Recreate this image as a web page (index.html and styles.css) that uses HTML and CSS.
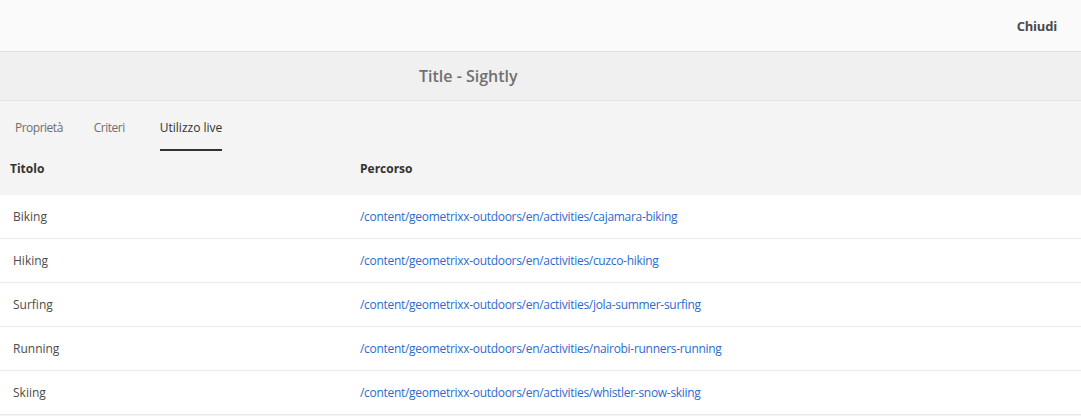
FILE: index.html
```html
<!DOCTYPE html>
<html lang="it">
<head>
<meta charset="utf-8">
<title>Title - Sightly</title>
<link rel="stylesheet" href="styles.css">
</head>
<body>
<header class="topbar">
  <button class="close-btn">Chiudi</button>
</header>
<div class="titlebar">
  <h1 class="title">Title - Sightly</h1>
</div>
<main class="content">
  <nav class="tabs">
    <a class="tab">Proprietà</a>
    <a class="tab">Criteri</a>
    <a class="tab active">Utilizzo live</a>
  </nav>
  <table class="usage">
    <thead>
      <tr><th class="col-title">Titolo</th><th>Percorso</th></tr>
    </thead>
    <tbody>
      <tr><td>Biking</td><td><a class="path">/content/geometrixx-outdoors/en/activities/cajamara-biking</a></td></tr>
      <tr><td>Hiking</td><td><a class="path">/content/geometrixx-outdoors/en/activities/cuzco-hiking</a></td></tr>
      <tr><td>Surfing</td><td><a class="path">/content/geometrixx-outdoors/en/activities/jola-summer-surfing</a></td></tr>
      <tr><td>Running</td><td><a class="path">/content/geometrixx-outdoors/en/activities/nairobi-runners-running</a></td></tr>
      <tr><td>Skiing</td><td><a class="path">/content/geometrixx-outdoors/en/activities/whistler-snow-skiing</a></td></tr>
    </tbody>
  </table>
</main>
</body>
</html>
```
FILE: styles.css
```css
* { box-sizing: border-box; }
html, body { margin: 0; padding: 0; }
body {
  font-family: "Open Sans", "Noto Sans", sans-serif;
  background: #f4f4f4;
  color: #323232;
  width: 1081px;
  height: 416px;
  overflow: hidden;
}
.topbar {
  height: 52px;
  background: #fafafa;
  border-bottom: 1px solid #e1e1e1;
  display: flex;
  justify-content: flex-end;
  align-items: center;
  padding-right: 24px;
}
.close-btn {
  font-family: inherit;
  font-size: 13px;
  font-weight: 700;
  color: #4b4b4b;
  background: none;
  border: 0;
  padding: 0;
  margin-top: 1px;
  letter-spacing: -0.2px;
}
.titlebar {
  height: 49px;
  background: #f0f0f0;
  border-bottom: 1px solid #e1e1e1;
  display: flex;
  align-items: center;
  padding-left: 419px;
}
.title {
  margin: 0;
  font-size: 16px;
  font-weight: 600;
  color: #707070;
  letter-spacing: 0;
}
.content { background: #f4f4f4; }
.tabs {
  display: flex;
  height: 50px;
  padding-left: 15px;
}
.tab {
  font-size: 12px;
  color: #6e6e6e;
  display: flex;
  align-items: center;
  padding-top: 4px;
  border-bottom: 2px solid transparent;
  letter-spacing: -0.5px;
}
.tab + .tab { margin-left: 31px; }
.tab.active {
  margin-left: 35px;
  color: #323232;
  border-bottom-color: #323232;
  letter-spacing: 0;
}
.usage {
  width: 100%;
  border-collapse: separate;
  border-spacing: 0;
}
.usage th {
  text-align: left;
  font-size: 12px;
  font-weight: 700;
  color: #323232;
  height: 44px;
  padding: 0 0 9px 10px;
}
.usage th.col-title { width: 350px; }
.usage td {
  height: 44px;
  background: #fff;
  border-bottom: 1px solid #ebebeb;
  font-size: 12px;
  color: #4b4b4b;
  padding: 0 0 0 13px;
}
.usage td + td { padding-left: 10px; }
.path {
  color: #2d6bcc;
  letter-spacing: -0.3px;
}
```
